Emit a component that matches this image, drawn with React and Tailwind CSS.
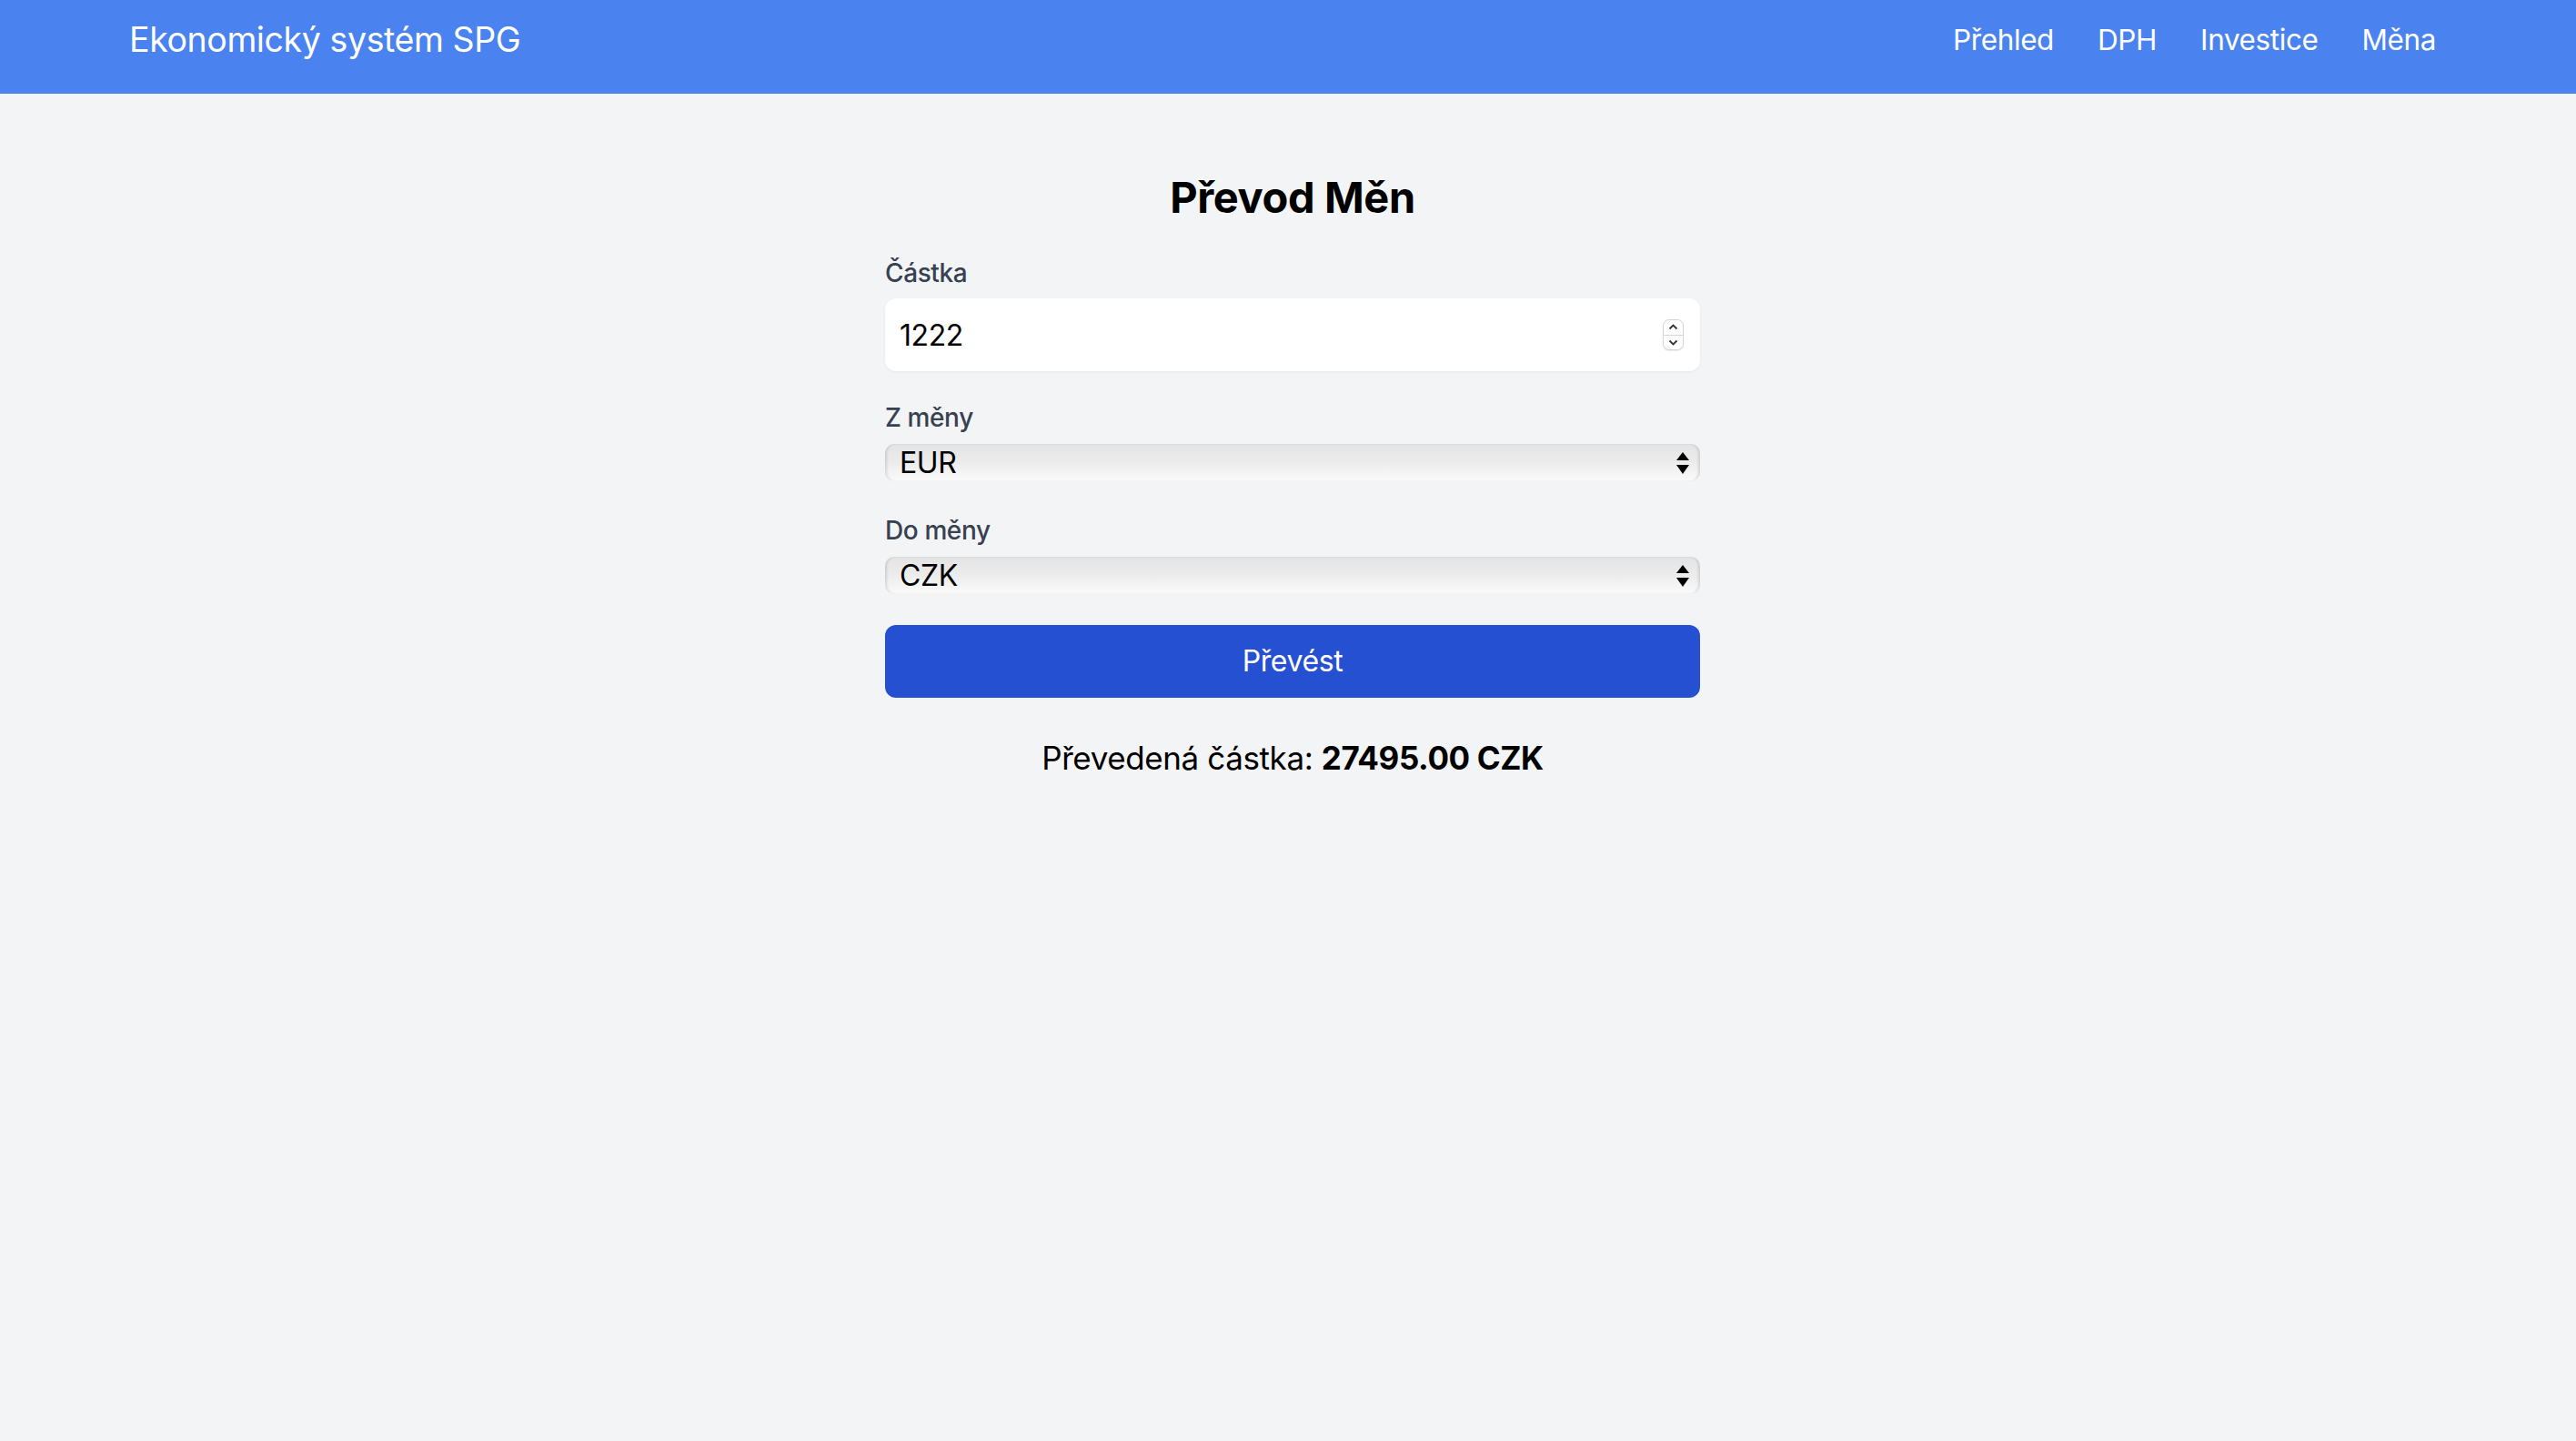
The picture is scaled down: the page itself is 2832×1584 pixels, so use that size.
import { useState } from "react";

const NAV = ["Přehled", "DPH", "Investice", "Měna"];
const CURRENCIES = ["CZK", "EUR", "USD", "GBP"];

const SelectArrows = () => (
  <svg className="pointer-events-none absolute right-[11px] top-1/2 -translate-y-1/2" width="16" height="26" viewBox="0 0 16 26">
    <path d="M8 1 L15 10 L1 10 Z" fill="#000" />
    <path d="M1 15 L15 15 L8 25 Z" fill="#000" />
  </svg>
);

const Spinner = () => (
  <div className="pointer-events-none absolute right-[18px] top-1/2 flex h-[34px] w-[23px] -translate-y-1/2 flex-col overflow-hidden rounded-[7px] border border-[#d4d4d4] bg-white shadow-[0_1px_1px_rgba(0,0,0,0.08)]">
    <div className="flex flex-1 items-center justify-center border-b border-[#d9d9d9]">
      <svg width="11" height="7" viewBox="0 0 11 7">
        <path d="M1.5 5.5 L5.5 1.5 L9.5 5.5" fill="none" stroke="#333" strokeWidth="1.8" />
      </svg>
    </div>
    <div className="flex flex-1 items-center justify-center">
      <svg width="11" height="7" viewBox="0 0 11 7">
        <path d="M1.5 1.5 L5.5 5.5 L9.5 1.5" fill="none" stroke="#333" strokeWidth="1.8" />
      </svg>
    </div>
  </div>
);

const CurrencySelect = ({ value, onChange }) => (
  <div className="relative mt-[9px]">
    <select
      value={value}
      onChange={(e) => onChange(e.target.value)}
      className="block h-[41px] w-full appearance-none rounded-[10px] bg-linear-to-b from-[#e4e4e4] via-[#ececec] to-[#fbfbfb] pl-[16px] text-[32px] leading-[41px] text-black shadow-[inset_3px_0_3px_-1px_rgba(0,0,0,0.12),inset_-3px_0_3px_-1px_rgba(0,0,0,0.12)] outline-none"
    >
      {CURRENCIES.map((c) => (
        <option key={c} value={c}>{c}</option>
      ))}
    </select>
    <SelectArrows />
  </div>
);

export default function App() {
  const [amount, setAmount] = useState("1222");
  const [from, setFrom] = useState("EUR");
  const [to, setTo] = useState("CZK");

  return (
    <div className="min-h-screen bg-[#f3f4f6] font-['Inter','Liberation_Sans',sans-serif] tracking-[-0.025em] text-black">
      {/* navbar */}
      <header className="h-[103px] bg-[#4a83ef] text-white">
        <div className="flex items-start justify-between pl-[142px] pr-[154px] pt-[16px]">
          <span className="text-[37.5px] leading-[56px]">Ekonomický systém SPG</span>
          <nav className="flex gap-[48px] text-[31.5px] leading-[56px]">
            {NAV.map((n) => (
              <a key={n} href="#" className="text-white">{n}</a>
            ))}
          </nav>
        </div>
      </header>

      <main className="ml-[973px] w-[896px] pt-[82px]">
        <h1 className="mb-[31px] text-center text-[47px] font-bold leading-[64px]">Převod Měn</h1>

        <label className="block text-[28px] font-medium leading-[40px] text-[#374151]">Částka</label>
        <div className="relative mt-[8px]">
          <input
            type="text"
            value={amount}
            onChange={(e) => setAmount(e.target.value)}
            className="block h-[80px] w-full rounded-[12px] bg-white px-[16px] text-[32px] text-black shadow-[0_1px_3px_rgba(0,0,0,0.06)] outline-none"
          />
          <Spinner />
        </div>

        <label className="mt-[31px] block text-[28px] font-medium leading-[40px] text-[#374151]">Z měny</label>
        <CurrencySelect value={from} onChange={setFrom} />

        <label className="mt-[34px] block text-[28px] font-medium leading-[40px] text-[#374151]">Do měny</label>
        <CurrencySelect value={to} onChange={setTo} />

        <button className="mt-[34px] block h-[80px] w-full rounded-[12px] bg-[#2550d2] text-[32px] text-white">
          Převést
        </button>

        <p className="mt-[38px] text-center text-[35px] leading-[56px]">
          Převedená částka: <span className="font-bold">27495.00 CZK</span>
        </p>
      </main>
    </div>
  );
}
